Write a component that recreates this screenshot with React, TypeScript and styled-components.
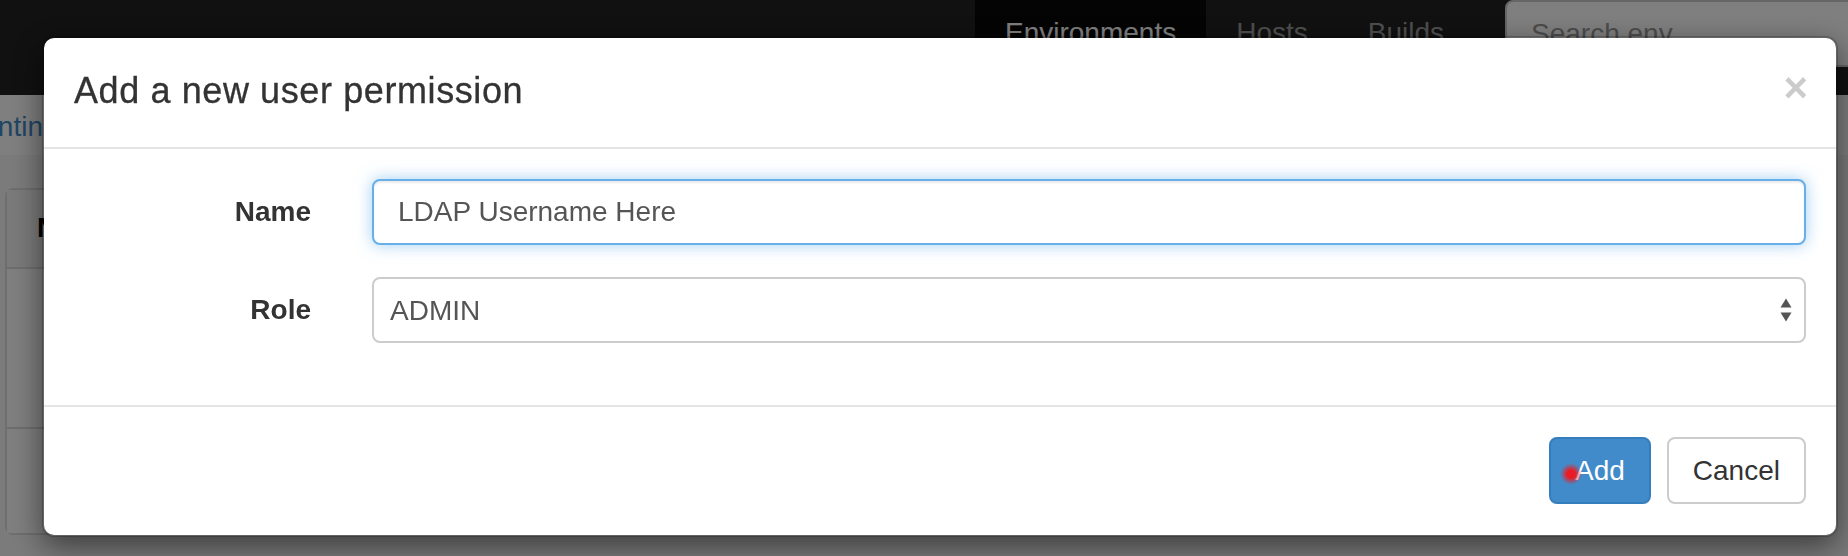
import React from "react";
import styled, { createGlobalStyle } from "styled-components";

const GlobalStyle = createGlobalStyle`
  html, body {
    margin: 0;
    padding: 0;
    overflow: hidden;
    background: #fff;
    font-family: "Liberation Sans", Arial, Helvetica, sans-serif;
  }
  * {
    box-sizing: border-box;
  }
`;

/* ---------- page behind the backdrop ---------- */

const Page = styled.div`
  width: 1848px;
  height: 556px;
  background: #f7f7f7;
  overflow: hidden;
`;

const Navbar = styled.nav`
  height: 95px;
  background: #222;
  display: flex;
  justify-content: flex-end;
  overflow: hidden;
`;

const NavList = styled.ul`
  display: flex;
  margin: 0;
  padding: 0;
  list-style: none;
`;

const NavItem = styled.li<{ $active?: boolean }>`
  padding: 13px 30px 0;
  height: 95px;
  font-size: 28px;
  line-height: 40px;
  color: ${(p) => (p.$active ? "#fff" : "#9d9d9d")};
  background: ${(p) => (p.$active ? "#080808" : "transparent")};
`;

const SearchForm = styled.form`
  padding-left: 31px;
  margin-right: -37px;
`;

const SearchInput = styled.input`
  width: 380px;
  height: 67px;
  border: 2px solid #ccc;
  border-radius: 8px;
  background: #fff;
  padding: 0 24px;
  font-family: inherit;
  font-size: 28px;
  color: #555;
  &::placeholder {
    color: #999;
  }
`;

const Breadcrumb = styled.div`
  height: 60px;
  background: #fff;
  padding-top: 16px;
  font-size: 28px;
  line-height: 32px;
  white-space: nowrap;
`;

const CrumbLink = styled.a`
  color: #428bca;
  text-decoration: none;
  margin-left: -80px;
`;

const Card = styled.div`
  margin: 33px 0 0 5px;
  width: 1200px;
  border: 2px solid #ddd;
  border-radius: 8px;
  background: #fff;
`;

const CardRow = styled.div<{ $h: number; $head?: boolean }>`
  height: ${(p) => p.$h}px;
  padding: 22px 0 0 30px;
  font-size: 28px;
  font-weight: ${(p) => (p.$head ? 700 : 400)};
  color: #000;
  background: ${(p) => (p.$head ? "#f5f5f5" : "#fff")};
  & + & {
    border-top: 2px solid #ddd;
  }
`;

/* ---------- modal ---------- */

const Backdrop = styled.div`
  position: fixed;
  inset: 0;
  background: rgba(0, 0, 0, 0.5);
`;

const Modal = styled.div`
  width: 1796px;
  margin: 36px 0 0 42px;
  background: #fff;
  background-clip: padding-box;
  border: 2px solid rgba(0, 0, 0, 0.2);
  border-radius: 12px;
  box-shadow: 0 10px 30px rgba(0, 0, 0, 0.5);
`;

const Header = styled.div`
  display: flex;
  align-items: flex-start;
  justify-content: space-between;
  padding: 28px 30px 31px;
  border-bottom: 2px solid #e5e5e5;
`;

const Title = styled.h4`
  margin: 0;
  font-size: 36px;
  line-height: 50px;
  font-weight: 500;
  letter-spacing: 0.6px;
  color: #333;
  -webkit-text-stroke: 0.3px #333;
`;

const Close = styled.button`
  margin: 1px -2px 0 0;
  padding: 0;
  border: 0;
  background: transparent;
  font-family: inherit;
  font-size: 42px;
  font-weight: 700;
  line-height: 1;
  color: #000;
  opacity: 0.2;
  cursor: pointer;
`;

const Body = styled.div`
  padding: 30px 30px 30px;
`;

const FormRow = styled.div`
  display: flex;
  align-items: center;
  margin-bottom: 32px;
`;

const Label = styled.label`
  width: 237px;
  margin-right: 61px;
  text-align: right;
  font-size: 28px;
  font-weight: 700;
  color: #333;
`;

const Control = styled.div`
  position: relative;
  flex: 1;
`;

const TextInput = styled.input<{ $focused?: boolean }>`
  display: block;
  width: 100%;
  height: 66px;
  padding: 0 24px;
  border: 2px solid ${(p) => (p.$focused ? "#66afe9" : "#ccc")};
  border-radius: 8px;
  font-family: inherit;
  font-size: 28px;
  color: #555;
  background: #fff;
  outline: none;
  box-shadow: ${(p) =>
    p.$focused
      ? "inset 0 2px 2px rgba(0,0,0,.075), 0 0 16px rgba(102,175,233,.6)"
      : "inset 0 2px 2px rgba(0,0,0,.075)"};
`;

const Select = styled.select`
  display: block;
  width: 100%;
  height: 66px;
  padding: 0 40px 0 16px;
  border: 2px solid #ccc;
  border-radius: 8px;
  font-family: inherit;
  font-size: 28px;
  color: #555;
  background: #fff;
  appearance: none;
  -webkit-appearance: none;
  outline: none;
`;

const SelectArrows = styled.svg`
  position: absolute;
  right: 14px;
  top: 21px;
  pointer-events: none;
`;

const Footer = styled.div`
  display: flex;
  justify-content: flex-end;
  gap: 16px;
  padding: 30px 30px 31px;
  border-top: 2px solid #e5e5e5;
`;

const Btn = styled.button<{ $primary?: boolean }>`
  position: relative;
  height: 67px;
  padding: 0 24px;
  border: 2px solid ${(p) => (p.$primary ? "#357ebd" : "#ccc")};
  border-radius: 8px;
  background: ${(p) => (p.$primary ? "#428bca" : "#fff")};
  color: ${(p) => (p.$primary ? "#fff" : "#333")};
  font-family: inherit;
  font-size: 28px;
  line-height: 39px;
  cursor: pointer;
`;

const CursorDot = styled.span`
  position: absolute;
  left: 9px;
  top: 24px;
  width: 22px;
  height: 22px;
  border-radius: 50%;
  background: radial-gradient(
    circle,
    #ec1a22 0%,
    #ec1a22 25%,
    rgba(236, 26, 34, 0.45) 48%,
    rgba(236, 26, 34, 0) 70%
  );
`;

export default function App() {
  return (
    <>
      <GlobalStyle />
      <Page>
        <Navbar>
          <NavList>
            <NavItem $active>Environments</NavItem>
            <NavItem>Hosts</NavItem>
            <NavItem>Builds</NavItem>
          </NavList>
          <SearchForm onSubmit={(e) => e.preventDefault()}>
            <SearchInput placeholder="Search env..." />
          </SearchForm>
        </Navbar>
        <Breadcrumb>
          <CrumbLink href="#">Quarantine</CrumbLink>
        </Breadcrumb>
        <Card>
          <CardRow $h={77} $head>
            Name
          </CardRow>
          <CardRow $h={160} />
          <CardRow $h={106} />
        </Card>
      </Page>

      <Backdrop>
        <Modal role="dialog">
          <Header>
            <Title>Add a new user permission</Title>
            <Close aria-label="Close">×</Close>
          </Header>
          <Body>
            <FormRow>
              <Label>Name</Label>
              <Control>
                <TextInput $focused defaultValue="LDAP Username Here" />
              </Control>
            </FormRow>
            <FormRow>
              <Label>Role</Label>
              <Control>
                <Select defaultValue="ADMIN">
                  <option value="ADMIN">ADMIN</option>
                  <option value="OPERATOR">OPERATOR</option>
                  <option value="READER">READER</option>
                </Select>
                <SelectArrows width="12" height="25" viewBox="0 0 12 25">
                  <polygon points="0.5,9.5 6,0.5 11.5,9.5" fill="#555" />
                  <polygon points="0.5,14.5 11.5,14.5 6,23.5" fill="#555" />
                </SelectArrows>
              </Control>
            </FormRow>
          </Body>
          <Footer>
            <Btn $primary>
              <CursorDot />
              Add
            </Btn>
            <Btn>Cancel</Btn>
          </Footer>
        </Modal>
      </Backdrop>
    </>
  );
}
